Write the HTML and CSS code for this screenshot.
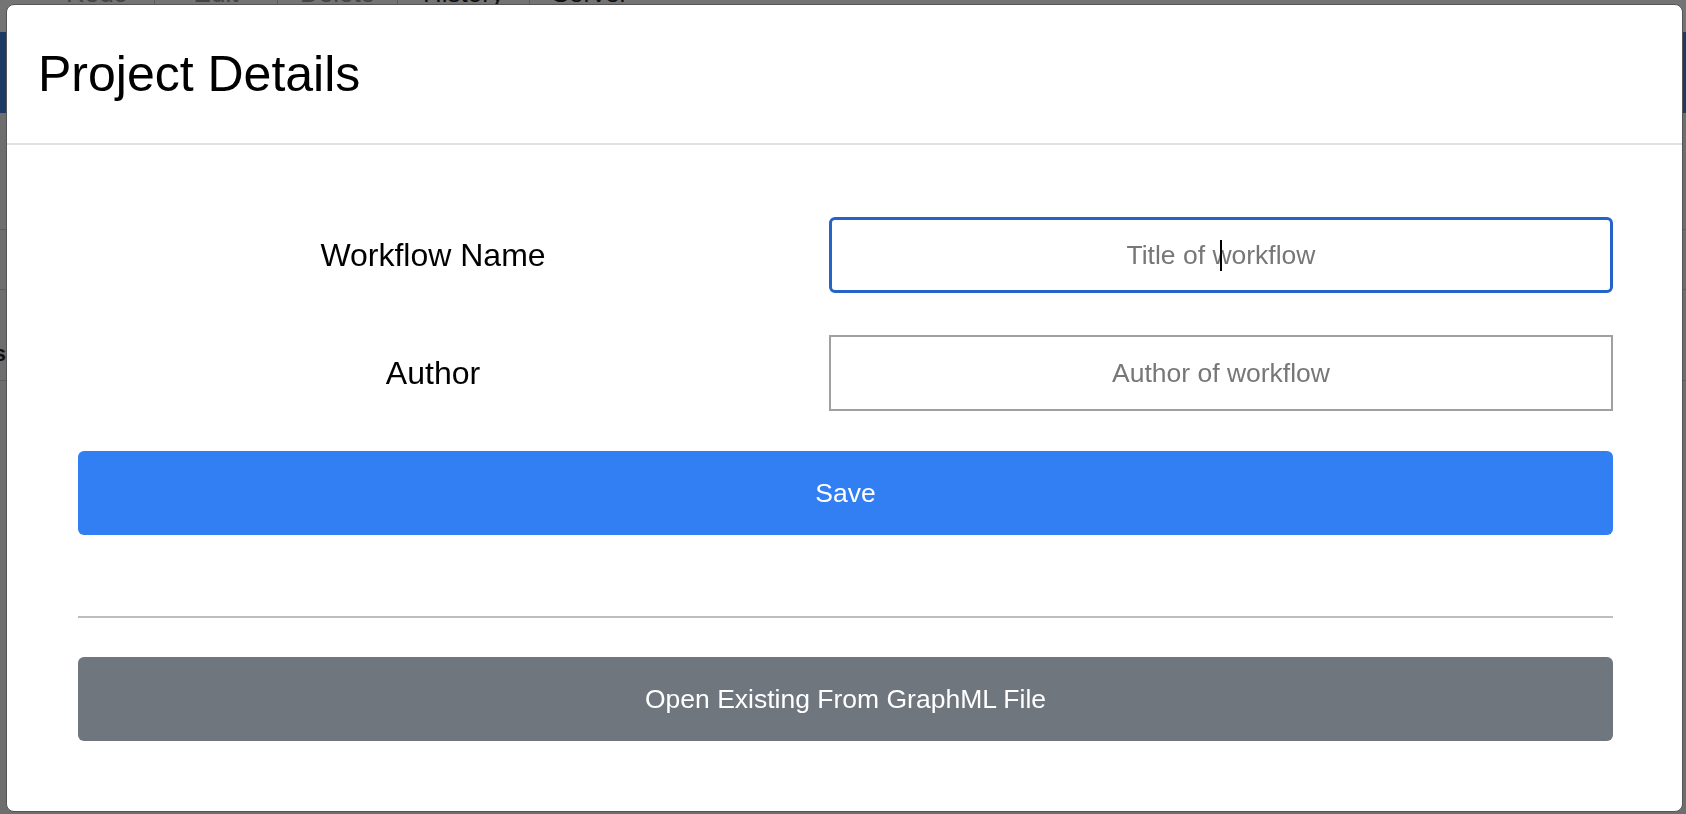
FILE: index.html
```html
<!DOCTYPE html>
<html lang="en">
<head>
<meta charset="utf-8">
<title>Project Details</title>
<link rel="stylesheet" href="styles.css">
</head>
<body>
<div class="app">
  <div class="menubar">
    <div class="menu-items">
      <span class="menu-item dim">Redo</span>
      <span class="menu-item dim">Edit</span>
      <span class="menu-item dim">Delete</span>
      <span class="menu-item">History</span>
      <span class="menu-item">Server</span>
    </div>
  </div>
  <div class="navbar"></div>
  <div class="panel-row row-a"></div>
  <div class="panel-row row-b"></div>
  <div class="side-title"><span>Workflows</span></div>
  <div class="panel-row row-c"></div>
</div>

<div class="overlay">
  <div class="modal">
    <div class="modal-header">
      <h4 class="modal-title">Project Details</h4>
    </div>
    <div class="modal-body">
      <div class="form-row">
        <label class="form-label" for="wf-name">Workflow Name</label>
        <div class="field">
          <input id="wf-name" class="form-input focused" type="text" placeholder="Title of workflow">
          <span class="caret"></span>
        </div>
      </div>
      <div class="form-row">
        <label class="form-label" for="wf-author">Author</label>
        <div class="field">
          <input id="wf-author" class="form-input" type="text" placeholder="Author of workflow">
        </div>
      </div>
      <button class="btn btn-primary" type="button">Save</button>
      <hr class="divider">
      <button class="btn btn-secondary" type="button">Open Existing From GraphML File</button>
    </div>
  </div>
</div>
</body>
</html>
```

FILE: styles.css
```css
html, body {
  margin: 0;
  padding: 0;
}

body {
  background: #6e6e6e;
  font-family: "Liberation Sans", Arial, Helvetica, sans-serif;
  overflow: hidden;
  width: 1686px;
  height: 814px;
}

.app {
  display: flex;
  flex-direction: column;
}

.menubar {
  height: 32px;
  background: #747474;
  overflow: hidden;
}

.menu-items {
  display: grid;
  grid-template-columns: 114px 123px 120px 132px 121px;
  margin-top: -20px;
  padding-left: 40px;
  font-size: 26px;
  line-height: 26px;
}

.menu-item {
  text-align: center;
  color: #111;
  border-left: 1px solid #5c5c5c;
}

.menu-item:first-child {
  border-left: none;
}

.menu-item.dim {
  color: #444;
}

.navbar {
  height: 81px;
  background: #1d3b62;
}

.panel-row {
  border-bottom: 1px solid #5d5d5d;
}

.row-a {
  height: 116px;
}

.row-b {
  height: 59px;
}

.side-title {
  display: flex;
  justify-content: flex-end;
  width: 6px;
  height: 40px;
  margin-top: 44px;
  align-items: center;
  font-weight: bold;
  font-size: 22px;
  color: #111;
}

.side-title span {
  white-space: nowrap;
}

.row-c {
  height: 6px;
}

/* ---------- modal ---------- */
.overlay {
  position: fixed;
  inset: 0;
  padding: 4px 3px 2px 6px;
  display: flex;
}

.modal {
  flex: 1;
  background: #fff;
  border: 1px solid #555;
  border-radius: 8px;
  display: flex;
  flex-direction: column;
  overflow: hidden;
}

.modal-header {
  height: 138px;
  border-bottom: 2px solid #dfe1e5;
  display: flex;
  align-items: center;
  padding-left: 31px;
}

.modal-title {
  margin: 0;
  font-size: 50px;
  line-height: 1;
  font-weight: normal;
  color: #000;
}

.modal-body {
  display: flex;
  flex-direction: column;
  padding: 72px 69px 70px 71px;
}

.form-row {
  display: grid;
  grid-template-columns: 710px 1fr;
  column-gap: 41px;
  align-items: center;
  margin-bottom: 42px;
}

.form-row + .form-row {
  margin-bottom: 40px;
}

.form-label {
  text-align: center;
  font-size: 32px;
  color: #000;
}

.field {
  position: relative;
  display: flex;
}

.form-input {
  flex: 1;
  box-sizing: border-box;
  height: 76px;
  border: 2px solid #a0a0a0;
  border-radius: 0;
  background: #fff;
  font-family: "Liberation Sans", Arial, Helvetica, sans-serif;
  font-size: 26.5px;
  text-align: center;
  color: #333;
  outline: none;
  padding: 0 12px;
}

.form-input::placeholder {
  color: #777;
}

.form-input.focused {
  border: 3px solid #2563c8;
  border-radius: 6px;
}

.caret {
  position: absolute;
  left: 391px;
  top: 23px;
  width: 2px;
  height: 31px;
  background: #000;
}

.btn {
  box-sizing: border-box;
  height: 84px;
  border: none;
  border-radius: 6px;
  color: #fff;
  font-family: "Liberation Sans", Arial, Helvetica, sans-serif;
  font-size: 26.5px;
  cursor: pointer;
}

.btn-primary {
  background: #327ff4;
}

.btn-secondary {
  background: #6f767e;
}

.divider {
  margin: 81px 0 39px;
  border: none;
  border-top: 2px solid #bdbdbd;
  height: 0;
}
```
